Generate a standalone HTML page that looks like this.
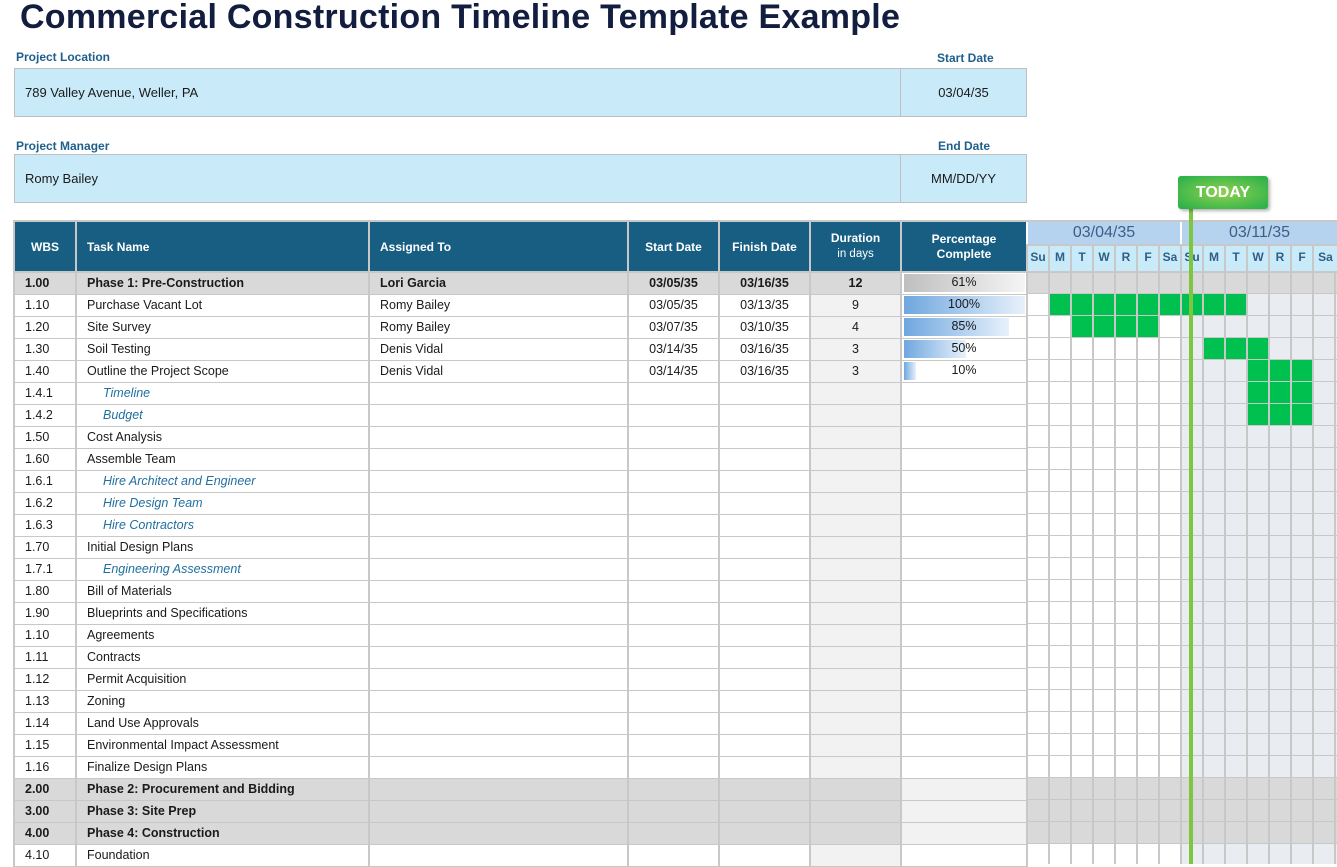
<!DOCTYPE html>
<html><head><meta charset="utf-8"><style>
*{margin:0;padding:0;box-sizing:border-box}
body{width:1337px;height:864px;overflow:hidden;background:#fff;font-family:"Liberation Sans",sans-serif;position:relative;color:#1a1a1a}
.a{position:absolute}
h1{position:absolute;left:20px;top:-2px;font-size:34px;font-weight:bold;color:#121d3f;white-space:nowrap;letter-spacing:0.25px}
.lbl{position:absolute;font-size:12px;font-weight:bold;color:#1f5f8b}
.box{position:absolute;background:#c9ebf9;border:1px solid #bfbfbf;font-size:13px;display:flex;align-items:center}
table{position:absolute;left:13px;top:220px;border-collapse:collapse;table-layout:fixed;font-size:12.5px}
td,th{border:2px solid #c8c8c8;height:22px;padding:0;white-space:nowrap;overflow:hidden}
td{border-width:1px 2px 1px 2px}
th{background:#175e82;color:#fff;font-size:12px;height:51px;font-weight:bold}
td.w{padding-left:10px}
td.t{padding-left:10px}
td.c{text-align:center}
td.d{background:#f2f2f2;text-align:center}
tr.p td{background:#d9d9d9;font-weight:bold}
tr.s td.t{padding-left:26px;font-style:italic;color:#1f6fa0}
.pb{position:relative;height:20px}
.pb span{position:absolute;left:0;right:0;top:2px;text-align:center;font-weight:normal}
.pb i{position:absolute;left:2px;top:1px;bottom:1px;background:linear-gradient(90deg,#6fa7df,#e8f1fb)}
</style></head><body>
<h1>Commercial Construction Timeline Template Example</h1>
<div class="lbl" style="left:16px;top:50px">Project Location</div>
<div class="lbl" style="left:937px;top:51px">Start Date</div>
<div class="box" style="left:14px;top:68px;width:887px;height:49px;padding-left:10px">789 Valley Avenue, Weller, PA</div>
<div class="box" style="left:900px;top:68px;width:127px;height:49px;justify-content:center">03/04/35</div>
<div class="lbl" style="left:16px;top:139px">Project Manager</div>
<div class="lbl" style="left:938px;top:139px">End Date</div>
<div class="box" style="left:14px;top:154px;width:887px;height:49px;padding-left:10px">Romy Bailey</div>
<div class="box" style="left:900px;top:154px;width:127px;height:49px;justify-content:center">MM/DD/YY</div>

<table>
<colgroup><col style="width:62px"><col style="width:293px"><col style="width:259px"><col style="width:91px"><col style="width:91px"><col style="width:91px"><col style="width:126px"></colgroup>
<tr><th>WBS</th><th style="text-align:left;padding-left:10px">Task Name</th><th style="text-align:left;padding-left:10px">Assigned To</th><th>Start Date</th><th>Finish Date</th><th style="line-height:15px">Duration<br><span style="font-weight:normal;font-size:11.5px">in days</span></th><th style="line-height:15px">Percentage<br>Complete</th></tr>
<tr class="p"><td class="w">1.00</td><td class="t">Phase 1: Pre-Construction</td><td class="t">Lori Garcia</td><td class="c">03/05/35</td><td class="c">03/16/35</td><td class="c">12</td><td style="background:#fff"><div class="pb"><i style="width:121px;background:linear-gradient(90deg,#bfbfbf,#f5f5f5)"></i><span>61%</span></div></td></tr>
<tr><td class="w">1.10</td><td class="t">Purchase Vacant Lot</td><td class="t">Romy Bailey</td><td class="c">03/05/35</td><td class="c">03/13/35</td><td class="d">9</td><td><div class="pb"><i style="width:121px"></i><span>100%</span></div></td></tr>
<tr><td class="w">1.20</td><td class="t">Site Survey</td><td class="t">Romy Bailey</td><td class="c">03/07/35</td><td class="c">03/10/35</td><td class="d">4</td><td><div class="pb"><i style="width:105px"></i><span>85%</span></div></td></tr>
<tr><td class="w">1.30</td><td class="t">Soil Testing</td><td class="t">Denis Vidal</td><td class="c">03/14/35</td><td class="c">03/16/35</td><td class="d">3</td><td><div class="pb"><i style="width:62px"></i><span>50%</span></div></td></tr>
<tr><td class="w">1.40</td><td class="t">Outline the Project Scope</td><td class="t">Denis Vidal</td><td class="c">03/14/35</td><td class="c">03/16/35</td><td class="d">3</td><td><div class="pb"><i style="width:12px"></i><span>10%</span></div></td></tr>
<tr class="s"><td class="w">1.4.1</td><td class="t">Timeline</td><td></td><td></td><td></td><td class="d"></td><td></td></tr>
<tr class="s"><td class="w">1.4.2</td><td class="t">Budget</td><td></td><td></td><td></td><td class="d"></td><td></td></tr>
<tr><td class="w">1.50</td><td class="t">Cost Analysis</td><td></td><td></td><td></td><td class="d"></td><td></td></tr>
<tr><td class="w">1.60</td><td class="t">Assemble Team</td><td></td><td></td><td></td><td class="d"></td><td></td></tr>
<tr class="s"><td class="w">1.6.1</td><td class="t">Hire Architect and Engineer</td><td></td><td></td><td></td><td class="d"></td><td></td></tr>
<tr class="s"><td class="w">1.6.2</td><td class="t">Hire Design Team</td><td></td><td></td><td></td><td class="d"></td><td></td></tr>
<tr class="s"><td class="w">1.6.3</td><td class="t">Hire Contractors</td><td></td><td></td><td></td><td class="d"></td><td></td></tr>
<tr><td class="w">1.70</td><td class="t">Initial Design Plans</td><td></td><td></td><td></td><td class="d"></td><td></td></tr>
<tr class="s"><td class="w">1.7.1</td><td class="t">Engineering Assessment</td><td></td><td></td><td></td><td class="d"></td><td></td></tr>
<tr><td class="w">1.80</td><td class="t">Bill of Materials</td><td></td><td></td><td></td><td class="d"></td><td></td></tr>
<tr><td class="w">1.90</td><td class="t">Blueprints and Specifications</td><td></td><td></td><td></td><td class="d"></td><td></td></tr>
<tr><td class="w">1.10</td><td class="t">Agreements</td><td></td><td></td><td></td><td class="d"></td><td></td></tr>
<tr><td class="w">1.11</td><td class="t">Contracts</td><td></td><td></td><td></td><td class="d"></td><td></td></tr>
<tr><td class="w">1.12</td><td class="t">Permit Acquisition</td><td></td><td></td><td></td><td class="d"></td><td></td></tr>
<tr><td class="w">1.13</td><td class="t">Zoning</td><td></td><td></td><td></td><td class="d"></td><td></td></tr>
<tr><td class="w">1.14</td><td class="t">Land Use Approvals</td><td></td><td></td><td></td><td class="d"></td><td></td></tr>
<tr><td class="w">1.15</td><td class="t">Environmental Impact Assessment</td><td></td><td></td><td></td><td class="d"></td><td></td></tr>
<tr><td class="w">1.16</td><td class="t">Finalize Design Plans</td><td></td><td></td><td></td><td class="d"></td><td></td></tr>
<tr class="p"><td class="w">2.00</td><td class="t">Phase 2: Procurement and Bidding</td><td></td><td></td><td></td><td></td><td style="background:#f2f2f2"></td></tr>
<tr class="p"><td class="w">3.00</td><td class="t">Phase 3: Site Prep</td><td></td><td></td><td></td><td></td><td style="background:#f2f2f2"></td></tr>
<tr class="p"><td class="w">4.00</td><td class="t">Phase 4: Construction</td><td></td><td></td><td></td><td></td><td style="background:#f2f2f2"></td></tr>
<tr><td class="w">4.10</td><td class="t">Foundation</td><td></td><td></td><td></td><td class="d"></td><td></td></tr>
</table>

<div class="a" style="left:1026px;top:220px;width:311px;height:644px;background:#fff;border-top:2px solid #c8c8c8"></div>
<div class="a" style="left:1180px;top:272px;width:157px;height:592px;background:#e9ecf1"></div>
<div class="a" style="left:1026px;top:272px;width:311px;height:22px;background:#d9d9d9"></div>
<div class="a" style="left:1026px;top:778px;width:311px;height:66px;background:#d9d9d9"></div>
<div class="a" style="left:1048px;top:294px;width:198px;height:22px;background:#00c04f"></div>
<div class="a" style="left:1070px;top:316px;width:88px;height:22px;background:#00c04f"></div>
<div class="a" style="left:1202px;top:338px;width:66px;height:22px;background:#00c04f"></div>
<div class="a" style="left:1246px;top:360px;width:66px;height:66px;background:#00c04f"></div>
<div class="a" style="left:1026px;top:244px;width:311px;height:620px;background:repeating-linear-gradient(90deg,#c8c8c8 0 2px,transparent 2px 22px)"></div>
<div class="a" style="left:1026px;top:293px;width:311px;height:571px;background:repeating-linear-gradient(180deg,#c8c8c8 0 1px,transparent 1px 22px)"></div>
<div class="a" style="left:1028px;top:222px;width:152px;height:22px;background:#b5d3ef;color:#3b5f86;font-size:16px;text-align:center;line-height:22px">03/04/35</div>
<div class="a" style="left:1182px;top:222px;width:155px;height:22px;background:#b5d3ef;color:#3b5f86;font-size:16px;text-align:center;line-height:22px">03/11/35</div>
<div class="a" style="left:1026px;top:244px;width:311px;height:27px;display:flex;font-size:12px;font-weight:bold;color:#2f5f86">
<div style="width:22px;border-left:2px solid #c8c8c8;background:#c9ebf9;text-align:center;line-height:27px">Su</div><div style="width:22px;border-left:2px solid #c8c8c8;background:#c9ebf9;text-align:center;line-height:27px">M</div><div style="width:22px;border-left:2px solid #c8c8c8;background:#c9ebf9;text-align:center;line-height:27px">T</div><div style="width:22px;border-left:2px solid #c8c8c8;background:#c9ebf9;text-align:center;line-height:27px">W</div><div style="width:22px;border-left:2px solid #c8c8c8;background:#c9ebf9;text-align:center;line-height:27px">R</div><div style="width:22px;border-left:2px solid #c8c8c8;background:#c9ebf9;text-align:center;line-height:27px">F</div><div style="width:22px;border-left:2px solid #c8c8c8;background:#c9ebf9;text-align:center;line-height:27px">Sa</div><div style="width:22px;border-left:2px solid #c8c8c8;background:#c9ebf9;text-align:center;line-height:27px">Su</div><div style="width:22px;border-left:2px solid #c8c8c8;background:#c9ebf9;text-align:center;line-height:27px">M</div><div style="width:22px;border-left:2px solid #c8c8c8;background:#c9ebf9;text-align:center;line-height:27px">T</div><div style="width:22px;border-left:2px solid #c8c8c8;background:#c9ebf9;text-align:center;line-height:27px">W</div><div style="width:22px;border-left:2px solid #c8c8c8;background:#c9ebf9;text-align:center;line-height:27px">R</div><div style="width:22px;border-left:2px solid #c8c8c8;background:#c9ebf9;text-align:center;line-height:27px">F</div><div style="width:25px;border-left:2px solid #c8c8c8;background:#c9ebf9;text-align:center;line-height:27px">Sa</div>
</div>
<div class="a" style="left:1026px;top:244px;width:311px;height:2px;background:#c8c8c8"></div>
<div class="a" style="left:1026px;top:271px;width:311px;height:2px;background:#c8c8c8"></div>
<div class="a" style="left:1189px;top:205px;width:4px;height:659px;background:#7cc642"></div>
<div class="a" style="left:1178px;top:176px;width:90px;height:33px;border-radius:3px;background:radial-gradient(ellipse at center,#8fd14f,#2fb24a 90%);box-shadow:2px 2px 3px rgba(0,0,0,.3);color:#fff;font-weight:bold;font-size:16px;text-align:center;line-height:33px">TODAY</div>
</body></html>
